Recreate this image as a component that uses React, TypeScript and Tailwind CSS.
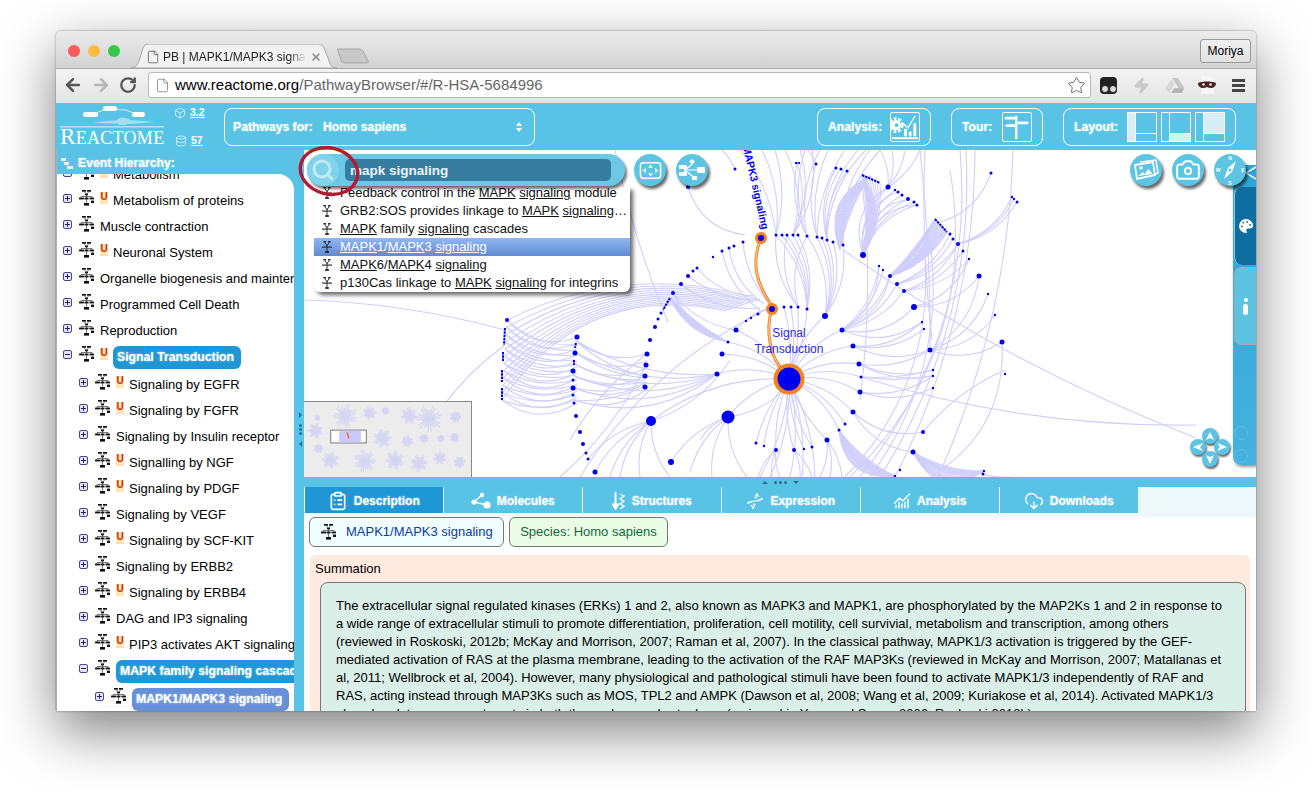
import {
  ArrowLeft, ArrowRight, Box, Camera, ChartNoAxesCombined, ClipboardList, CloudDownload,
  Database, Dna, File, Palette, RotateCw, Search, Star, X, Zap,
} from 'lucide-react'

type Pt = [number, number]

const range = (x1: number, y1: number, x2: number, y2: number, n: number): Pt[] =>
  Array.from({ length: n }, (_, i) => [x1 + ((x2 - x1) * i) / (n - 1), y1 + ((y2 - y1) * i) / (n - 1)] as Pt)

const arc = (x1: number, y1: number, x2: number, y2: number, c: number) => {
  const mx = (x1 + x2) / 2 - (y2 - y1) * c
  const my = (y1 + y2) / 2 + (x2 - x1) * c
  return `M${x1} ${y1}Q${mx} ${my} ${x2} ${y2}`
}

const fan = (from: Pt, to: Pt[], c = 0.2) => to.map((t) => arc(from[0], from[1], t[0], t[1], c))
const sweep = (from: Pt, to: Pt, c1: number, c2: number, n: number) =>
  Array.from({ length: n }, (_, i) => arc(from[0], from[1], to[0], to[1], c1 + ((c2 - c1) * i) / (n - 1)))

const edges: string[] = [
  ...fan([789, 379], [[776, 450], [764, 446], [756, 443], [794, 450], [804, 449], [812, 447], [827, 440]], 0.12),
  ...fan([789, 379], [[839, 430], [845, 424], [853, 412], [860, 392], [861, 377], [860, 364], [853, 346], [842, 330], [825, 316]], -0.18),
  ...fan([789, 379], [[807, 309], [798, 307], [791, 307], [784, 307]], 0.1),
  ...fan([789, 379], [[717, 374], [722, 354], [728, 342], [736, 330], [728, 417], [651, 421]], 0.18),
  ...fan([789, 379], [[770, 477], [790, 477], [802, 477], [815, 477], [760, 477]], -0.12),
  ...fan([776, 450], [[772, 477], [780, 477], [758, 477]], 0.15),
  ...fan([794, 450], [[800, 477], [812, 477]], -0.15),
  ...fan([827, 440], [[830, 477], [842, 477], [820, 477]], -0.15),
  ...fan([728, 417], [[747, 477], [712, 477], [690, 472], [671, 462], [700, 440], [789, 385]], 0.18),
  ...fan([651, 421], [[595, 472], [640, 477], [620, 477], [588, 459], [610, 477], [670, 477], [730, 360]], 0.18),
  ...fan([772, 309], [[758, 314], [751, 318], [746, 321], [736, 330]], 0.2),
  ...fan([807, 309], [[776, 235], [782, 235], [787, 235], [793, 235], [798, 235]], 0.18),
  ...fan([798, 307], [[776, 235], [787, 235], [807, 236]], -0.2),
  ...fan([825, 316], [[807, 236], [817, 237], [822, 238], [827, 240], [833, 242], [843, 245]], 0.2),
  ...fan([842, 330], [[879, 266], [883, 270], [890, 276], [897, 284], [904, 291]], 0.2),
  ...fan([776, 235], [[740, 150], [762, 150], [775, 150]], 0.15),
  ...fan([793, 235], [[797, 163], [785, 150], [800, 150], [812, 150]], 0.2),
  ...fan([807, 236], [[797, 163], [805, 150], [820, 150]], -0.18),
  ...fan([817, 237], [[816, 164], [828, 150], [845, 150]], -0.15),
  ...fan([827, 240], [[836, 168], [840, 169], [847, 171], [858, 150], [866, 150]], -0.2),
  ...fan([843, 245], [[862, 175], [870, 150], [880, 150]], -0.2),
  ...fan([863, 255], range(862, 175, 880, 183, 8), 0.16),
  ...fan([863, 255], [[888, 187], [895, 190], [902, 195], [908, 199], [914, 202], [917, 205]], -0.25),
  ...fan([863, 255], [[888, 187], [898, 192], [908, 199], [917, 205]], -0.4),
  ...sweep([863, 255], [862, 175], 0.1, 0.34, 10),
  ...sweep([840, 250], [870, 176], -0.45, -0.1, 16),
  ...fan([888, 187], [[880, 150], [892, 150], [905, 150], [920, 150]], 0.16),
  ...sweep([890, 276], [935, 219], 0.05, 0.16, 8),
  ...fan([890, 276], range(935, 219, 947, 232, 14), 0.2),
  ...fan([897, 284], [[950, 234], [953, 239], [958, 244]], 0.2),
  ...fan([904, 291], [[958, 244], [963, 251], [969, 259]], 0.2),
  ...fan([914, 307], [[979, 276], [969, 259]], 0.25),
  ...fan([930, 350], [[979, 276], [988, 294], [995, 315], [1002, 342]], 0.25),
  ...fan([958, 244], [[1012, 197], [1014, 199], [1017, 202]], 0.22),
  ...fan([941, 222], [[991, 173]], 0.25),
  ...fan([842, 330], [[914, 307], [922, 322], [879, 266], [890, 276]], 0.28),
  ...fan([853, 346], [[922, 322], [924, 329], [930, 350]], 0.22),
  ...fan([859, 364], [[930, 350], [933, 370], [933, 376]], 0.18),
  ...fan([861, 377], [[933, 370], [933, 376], [1196, 425]], 0.08),
  ...fan([860, 392], [[933, 388], [933, 376]], 0.2),
  ...fan([853, 412], [[923, 432], [913, 452]], 0.25),
  ...sweep([913, 452], [984, 471], 0.14, 0.56, 14),
  ...sweep([839, 430], [895, 476], 0.12, 0.5, 16),
  arc(983, 474, 1010, 477, 0.1),
  arc(843, 250, 1196, 438, 0.06),
  arc(938, 477, 1013, 150, 0.1),
  arc(895, 477, 975, 150, 0.12),
  arc(880, 477, 966, 150, 0.16),
  arc(860, 477, 960, 150, 0.2),
  arc(850, 477, 950, 170, 0.26),
  arc(870, 477, 930, 240, 0.2),
  arc(845, 477, 925, 260, 0.22),
  arc(932, 340, 925, 150, -0.04),
  arc(930, 350, 920, 150, 0.03),
  arc(860, 400, 862, 180, 0.06),
  arc(1002, 342, 930, 477, -0.3),
  arc(923, 432, 1005, 370, -0.12),
  arc(615, 150, 668, 322, 0.05),
  arc(688, 187, 745, 235, 0.32),
  arc(735, 169, 722, 150, 0.1),
  arc(816, 164, 808, 150, 0.1),
  ...fan([673, 293], [[728, 342], [736, 330]], 0.2),
  ...sweep([670, 298], [728, 342], 0.08, 0.26, 12),
  ...range(507, 320, 502, 400, 12).flatMap((p, i) => [
    arc(p[0], p[1], 577, 337 + i * 6, 0.34),
    arc(p[0], p[1], 575, 345 + i * 5, 0.2),
    arc(p[0], p[1], 760 - i * 3, 300 + i, -0.2 - i * 0.012),
  ]),
  ...range(575, 340, 574, 400, 6).flatMap((p, i) => [
    arc(p[0], p[1], 647, 354 + i * 7, 0.26),
    arc(p[0], p[1], 645, 376 + i * 2, 0.14),
    arc(p[0], p[1], 717, 374, 0.16 + i * 0.02),
  ]),
  arc(505, 330, 304, 300, 0.06),
  arc(505, 345, 440, 410, 0.08),
  arc(681, 284, 760, 308, 0.2),
  arc(688, 276, 760, 300, 0.18),
  arc(697, 268, 755, 296, 0.22),
  arc(722, 251, 760, 310, 0.2),
  arc(743, 242, 768, 302, 0.16),
  arc(729, 248, 764, 304, 0.22),
  arc(646, 365, 560, 477, -0.1),
  arc(758, 314, 580, 477, 0.14),
  arc(647, 354, 570, 440, 0.1),
]

// [x, y, r], page coordinates
const dots: [number, number, number][] = [
  [735, 169, 1.5], [816, 164, 1.5], [688, 187, 2], [836, 168, 1.5], [841, 169, 1.5], [847, 171, 1.5],
  [776, 235, 1.5], [782, 235, 1.5], [787, 235, 1.5], [793, 235, 1.5], [798, 235, 1.5], [807, 236, 1.5], [817, 237, 1.5],
  [822, 238, 1.5], [827, 240, 1.5], [833, 242, 1.5], [843, 245, 1.5], [863, 255, 3],
  [743, 242, 1.5], [734, 246, 1.5], [729, 248, 1.5], [722, 251, 1.5], [713, 257, 1.2],
  [697, 268, 1.5], [693, 271, 1.5], [688, 276, 2], [681, 284, 2], [673, 293, 2],
  [661, 313, 1.5], [658, 319, 1.5], [655, 327, 2], [650, 340, 2], [647, 354, 2.5], [646, 365, 2.5], [645, 376, 2.5], [645, 387, 2.5],
  [577, 337, 2.5], [575, 353, 2.5], [573, 371, 2.5], [573, 388, 2.5], [573, 380, 1.5], [573, 395, 1.5], [574, 403, 1.5],
  [576, 416, 2], [580, 432, 2], [583, 444, 2], [586, 453, 1.5], [588, 459, 1.5], [595, 472, 2.5],
  [507, 320, 2], [736, 330, 2.5], [728, 342, 1.5], [722, 354, 2.5], [717, 374, 2.5], [728, 417, 6.5], [651, 421, 5], [671, 462, 3],
  [758, 314, 1.5], [751, 318, 1.2], [746, 321, 1.2], [784, 307, 1.5], [791, 307, 1.5], [798, 307, 1.5], [807, 309, 1.5],
  [825, 316, 3], [842, 330, 2.5], [853, 346, 2.5], [859, 364, 2.5], [861, 377, 1.5], [860, 392, 2.5], [853, 412, 2.5],
  [845, 424, 1.5], [839, 430, 1.5], [827, 440, 2.5], [812, 447, 1.5], [804, 449, 1.2], [794, 450, 2], [776, 450, 2], [764, 446, 1.2], [756, 443, 1.5],
  [888, 187, 2.5], [895, 190, 1.2], [898, 192, 1.5], [902, 195, 1.5], [908, 199, 2], [914, 202, 1.5], [917, 205, 1.5],
  [991, 173, 1.5], [1012, 197, 1.2], [1014, 199, 1.2], [1017, 202, 1.5], [950, 234, 1.5], [953, 239, 1.5], [958, 244, 2], [963, 251, 1.5], [969, 259, 1.2],
  [979, 276, 2.5], [988, 294, 1.2], [995, 315, 1.2], [1002, 342, 2.5], [1005, 374, 1.2],
  [879, 266, 1.2], [883, 270, 1.2], [890, 276, 2], [897, 284, 2], [904, 291, 2], [914, 307, 3], [922, 322, 1.2], [924, 329, 1.2], [930, 350, 2.5],
  [933, 370, 1.2], [933, 376, 1.2], [933, 388, 1.2], [923, 432, 2], [913, 452, 2.5], [900, 470, 1.2], [895, 476, 1.2], [984, 471, 1.2], [983, 474, 1.5],
]

// thick runs of dots drawn as short bars
const bars: [number, number, number, number][] = [
  [795, 163, 800, 163], [862, 175, 880, 183], [935, 219, 947, 232], [670, 298, 663, 310],
  [576, 343, 575, 348], [574, 360, 574, 365], [505, 328, 504, 345], [503, 352, 503, 362], [502, 370, 502, 382], [502, 388, 502, 400],
]

const miniClusters: [number, number, number][] = [
  [345, 415, 13], [370, 412, 7], [386, 410, 4], [317, 417, 3], [410, 415, 9], [430, 418, 14], [457, 416, 6], [315, 430, 8],
  [383, 438, 10], [408, 441, 6], [425, 438, 5], [442, 438, 4], [456, 437, 5], [318, 448, 5], [330, 460, 9], [365, 461, 12],
  [395, 460, 10], [420, 463, 9], [441, 458, 7], [461, 462, 6],
]

function PathwayIcon({ className = '' }: { className?: string }) {
  return (
    <svg viewBox="0 0 15 16" className={`h-4 w-[15px] flex-none ${className}`} fill="#111">
      <rect x="3" y="0" width="4" height="1.7" />
      <rect x="8" y="0" width="4" height="1.7" />
      <path d="M5 1.7 7.5 4 10 1.7M2 8V6.5H13V8M7.5 4V13" fill="none" stroke="#555" strokeWidth="0.8" />
      <rect x="6" y="3.6" width="3" height="1.7" />
      <rect x="0" y="7.6" width="5" height="1.8" />
      <rect x="5.5" y="7.6" width="4" height="1.8" />
      <rect x="10.5" y="7.6" width="4.5" height="1.8" />
      <rect x="5" y="13" width="5" height="2.6" />
      <rect x="12" y="10.6" width="3" height="2.4" />
    </svg>
  )
}

function ReactionIcon() {
  return (
    <svg viewBox="0 0 11 13" className="h-[12px] w-[10px] flex-none" fill="#222">
      <rect x="1.5" y="0" width="3" height="1.5" />
      <rect x="6.5" y="0" width="3" height="1.5" />
      <path d="M3 1.5 5.5 5 8 1.5" fill="none" stroke="#222" />
      <rect x="5" y="4" width="1" height="7" />
      <rect x="0" y="6" width="11" height="1.2" />
      <rect x="3.5" y="11" width="4" height="2" />
    </svg>
  )
}

function Toggle({ open }: { open?: boolean }) {
  return (
    <svg viewBox="0 0 9 9" className="h-[9px] w-[9px] flex-none -translate-y-[3px]">
      <rect x="0.5" y="0.5" width="8" height="8" rx="1.5" fill="#e6e6f6" stroke="#44449c" />
      <rect x="2" y="4" width="5" height="1" fill="#22226a" />
      {!open && <rect x="4" y="2" width="1" height="5" fill="#22226a" />}
    </svg>
  )
}

function UBadge() {
  return (
    <span className="mr-[5px] flex h-3 w-2 flex-none -translate-y-[3px] items-start justify-center bg-[#fde3b4] text-[10px] leading-[10px] font-bold text-[#d91f00]">
      U
    </span>
  )
}

type Row = { label: string; depth: 0 | 1 | 2; u?: boolean; open?: boolean; pill?: 'blue' | 'violet'; gap?: boolean }

const rows: Row[] = [
  { label: 'Metabolism', depth: 0, u: true, open: true },
  { label: 'Metabolism of proteins', depth: 0, u: true },
  { label: 'Muscle contraction', depth: 0 },
  { label: 'Neuronal System', depth: 0, u: true },
  { label: 'Organelle biogenesis and maintenance', depth: 0 },
  { label: 'Programmed Cell Death', depth: 0 },
  { label: 'Reproduction', depth: 0 },
  { label: 'Signal Transduction', depth: 0, u: true, open: true, pill: 'blue', gap: true },
  { label: 'Signaling by EGFR', depth: 1, u: true },
  { label: 'Signaling by FGFR', depth: 1, u: true },
  { label: 'Signaling by Insulin receptor', depth: 1 },
  { label: 'Signalling by NGF', depth: 1, u: true },
  { label: 'Signaling by PDGF', depth: 1, u: true },
  { label: 'Signaling by VEGF', depth: 1 },
  { label: 'Signaling by SCF-KIT', depth: 1, u: true },
  { label: 'Signaling by ERBB2', depth: 1 },
  { label: 'Signaling by ERBB4', depth: 1, u: true },
  { label: 'DAG and IP3 signaling', depth: 1 },
  { label: 'PIP3 activates AKT signaling', depth: 1, u: true },
  { label: 'MAPK family signaling cascades', depth: 1, open: true, pill: 'blue', gap: true },
  { label: 'MAPK1/MAPK3 signaling', depth: 2, pill: 'violet' },
]

function TreeRow({ row }: { row: Row }) {
  const indent = row.depth === 0 ? 'pl-[6px]' : row.depth === 1 ? 'pl-[22px]' : 'pl-[38px]'
  return (
    <div className={`flex h-[26px] items-center whitespace-nowrap text-[13px] text-black ${indent} ${row.gap ? 'mb-[2px]' : ''}`}>
      <Toggle open={row.open} />
      <PathwayIcon className="mr-[6px] ml-[7px] -translate-y-[3px]" />
      {row.u && <UBadge />}
      {row.pill ? (
        <span
          className={`flex h-[23px] items-center rounded-md pr-[7px] pl-[4px] text-[12.25px] font-bold text-white [text-shadow:0_0_2px_rgba(255,255,255,0.7)] ${
            row.pill === 'blue' ? 'bg-[#1f97d4]' : 'bg-[#6690d8]'
          }`}
        >
          {row.label}
        </span>
      ) : (
        row.label
      )}
    </div>
  )
}

function Signal({ x, y, r = 1.5 }: { x: number; y: number; r?: number }) {
  return <circle cx={x} cy={y} r={r} fill="#0000f0" />
}

function Graph() {
  return (
    <svg viewBox="304 150 952 327" className="absolute inset-0 h-full w-full">
      <g fill="none" stroke="#cfcffb" strokeWidth="1.1">
        {edges.map((d, i) => (
          <path key={i} d={d} />
        ))}
      </g>
      <path d="M761 238C750 265 758 285 771 305" fill="none" stroke="#f58220" strokeWidth="3" />
      <path d="M772 309C765 330 770 360 785 372" fill="none" stroke="#f58220" strokeWidth="3" />
      <path d="M761 238C750 265 758 285 771 305M772 309C765 330 770 360 785 372" fill="none" stroke="#f8e8dc" strokeWidth="0.8" />
      <g stroke="#0000f0" strokeWidth="2" strokeDasharray="2.5 0.8">
        {bars.map((b, i) => (
          <line key={i} x1={b[0]} y1={b[1]} x2={b[2]} y2={b[3]} />
        ))}
      </g>
      {dots.map((d, i) => (
        <Signal key={i} x={d[0]} y={d[1]} r={d[2]} />
      ))}
      <circle cx="761" cy="238" r="6" fill="#f58220" />
      <Signal x={761} y={238} r={3} />
      <circle cx="772" cy="309" r="6" fill="#f58220" />
      <Signal x={772} y={309} r={3} />
      <circle cx="789" cy="379" r="15.5" fill="#f58220" />
      <Signal x={789} y={379} r={11.5} />
      <text x="762" y="230" transform="rotate(77 762 230)" textAnchor="end" fill="#0000f0" fontSize="10.5" fontWeight="bold">
        MAPK1/MAPK3 signaling
      </text>
      <text x="789" y="337" textAnchor="middle" fill="#2a2af0" fontSize="12">
        Signal
      </text>
      <text x="789" y="353" textAnchor="middle" fill="#2a2af0" fontSize="12">
        Transduction
      </text>
    </svg>
  )
}

function Minimap() {
  return (
    <div className="absolute bottom-0 left-0 h-[76px] w-[168px] border-t border-r border-[#888] bg-[#ececec]">
      <svg viewBox="304 401 168 76" className="h-full w-full">
        <g stroke="#d5d5f4" strokeWidth="1.2">
          {miniClusters.flatMap((c, i) =>
            Array.from({ length: 26 }, (_, j) => {
              const a = (j / 26) * Math.PI * 2 + i
              const l = c[2] * (0.5 + 0.5 * Math.abs(Math.sin(j * 2.3 + i)))
              return <line key={`${i}-${j}`} x1={c[0]} y1={c[1]} x2={c[0] + Math.cos(a) * l} y2={c[1] + Math.sin(a) * l} />
            }),
          )}
        </g>
        <rect x="330.5" y="429.5" width="36" height="13" fill="#fff" stroke="#777" />
        <rect x="339" y="430" width="22" height="12" fill="#c9c9fb" />
        <path d="M347 432 349 438" stroke="#f2682a" strokeWidth="1.5" />
      </svg>
    </div>
  )
}

function RoundButton({ className, children }: { className: string; children: React.ReactNode }) {
  return (
    <div className={`absolute top-[4px] flex h-8 w-8 items-center justify-center rounded-full bg-[#5ec4e4] text-white shadow-[2px_3px_3px_rgba(0,0,0,0.6)] ${className}`}>
      {children}
    </div>
  )
}

function ArrowButton({ className, d }: { className: string; d: string }) {
  return (
    <div className={`absolute flex h-4 w-4 items-center justify-center rounded-full bg-[#5ec4e4] shadow-[1px_2px_2px_rgba(0,0,0,0.6)] ${className}`}>
      <svg viewBox="0 0 12 12" className="h-3 w-3" fill="#fff">
        <path d={d} />
      </svg>
    </div>
  )
}

function LayoutIcon({ active }: { active: 'left' | 'bottom' | 'top' }) {
  return (
    <div className="grid h-[30px] w-[30px] grid-cols-[7px_1fr] grid-rows-[1fr_7px] gap-px border border-white bg-white">
      <div className={`row-span-2 ${active === 'left' ? 'bg-[#d6eef6]' : 'bg-[#58c3e5]'}`} />
      <div className={active === 'top' ? 'bg-[#d6eef6]' : 'bg-[#58c3e5]'} />
      <div className={active === 'bottom' ? 'bg-[#d6eef6]' : 'bg-[#58c3e5]'} />
    </div>
  )
}

function HeaderGroup({ label, className = '', children }: { label: string; className?: string; children: React.ReactNode }) {
  return (
    <div className={`flex h-[38px] items-center justify-between rounded-lg border border-white px-[10px] text-[12.2px] font-bold text-white [text-shadow:0_0_2px_rgba(255,255,255,0.6)] ${className}`}>
      <span className="translate-y-px">{label}</span>
      {children}
    </div>
  )
}

const tabs = [
  { label: 'Description', icon: <ClipboardList className="h-5 w-5" strokeWidth={2} />, active: true },
  {
    label: 'Molecules',
    icon: (
      <svg viewBox="0 0 20 18" className="h-[18px] w-5" fill="#fff">
        <circle cx="3" cy="10" r="2.6" />
        <circle cx="11" cy="3" r="2.2" />
        <circle cx="16" cy="13" r="3.6" />
        <path d="M3 10 11 3M3 10 16 13" stroke="#fff" strokeWidth="1.4" />
      </svg>
    ),
  },
  {
    label: 'Structures',
    icon: (
      <svg viewBox="0 0 14 20" className="h-5 w-[14px]" fill="none" stroke="#fff">
        <path d="M3.5 1V14" strokeWidth="2" />
        <path d="M0 13 3.5 19 7 13Z" fill="#fff" />
        <path d="M8 3 12 5 8 8 12 10 8 13 12 15 8 18" strokeWidth="1.3" />
      </svg>
    ),
  },
  { label: 'Expression', icon: <Dna className="h-[18px] w-[18px]" strokeWidth={1.5} /> },
  { label: 'Analysis', icon: <ChartNoAxesCombined className="h-[18px] w-[18px]" strokeWidth={2} /> },
  { label: 'Downloads', icon: <CloudDownload className="h-5 w-5" strokeWidth={1.6} /> },
]

const matches = [
  <>Feedback control in the <u>MAPK</u> <u>signaling</u> module</>,
  <>GRB2:SOS provides linkage to <u>MAPK</u> <u>signaling</u>…</>,
  <><u>MAPK</u> family <u>signaling</u> cascades</>,
  <><u>MAPK</u>1/<u>MAPK</u>3 <u>signaling</u></>,
  <><u>MAPK</u>6/<u>MAPK</u>4 <u>signaling</u></>,
  <>p130Cas linkage to <u>MAPK</u> <u>signaling</u> for integrins</>,
]

const summation = [
  'The extracellular signal regulated kinases (ERKs) 1 and 2, also known as MAPK3 and MAPK1, are phosphorylated by the MAP2Ks 1 and 2 in response to',
  'a wide range of extracellular stimuli to promote differentiation, proliferation, cell motility, cell survivial, metabolism and transcription, among others',
  '(reviewed in Roskoski, 2012b; McKay and Morrison, 2007; Raman et al, 2007). In the classical pathway, MAPK1/3 activation is triggered by the GEF-',
  'mediated activation of RAS at the plasma membrane, leading to the activation of the RAF MAP3Ks (reviewed in McKay and Morrison, 2007; Matallanas et',
  'al, 2011; Wellbrock et al, 2004). However, many physiological and pathological stimuli have been found to activate MAPK1/3 independently of RAF and',
  'RAS, acting instead through MAP3Ks such as MOS, TPL2 and AMPK (Dawson et al, 2008; Wang et al, 2009; Kuriakose et al, 2014). Activated MAPK1/3',
  'phosphorylate numerous targets in both the nucleus and cytoplasm (reviewed in Yoon and Seger, 2006; Roskoski 2012b).',
]

export default function App() {
  return (
    <div className="h-[792px] w-[1312px] overflow-hidden bg-white pt-[31px] pl-[56px] [font-family:'Liberation_Sans',Arial,sans-serif]">
      <div className="flex h-[680px] w-[1200px] flex-col overflow-hidden rounded-t-[5px] shadow-[0_20px_55px_rgba(0,0,0,0.5),0_0_2px_rgba(0,0,0,0.5)]">
        {/* Title bar */}
        <div className="relative flex h-[37px] flex-none items-start bg-gradient-to-b from-[#ececec] to-[#d2d2d2]">
          <div className="mt-[14px] ml-[12px] flex gap-2">
            <span className="h-3 w-3 rounded-full bg-[#fc5b57]" />
            <span className="h-3 w-3 rounded-full bg-[#fdbc40]" />
            <span className="h-3 w-3 rounded-full bg-[#34c749]" />
          </div>
          <div className="relative mt-[13px] ml-[11px] h-6 w-[206px]">
            <svg viewBox="0 0 206 24" className="absolute inset-0 h-full w-full">
              <path d="M0 24C6 24 7 20 9 14L12 4C13 1 15 0 18 0H187C190 0 192 1 193 4L197 14C199 20 200 24 206 24Z" fill="#f2f2f2" stroke="#a8a8a8" />
            </svg>
            <div className="absolute inset-0 flex items-center pt-px pl-[15px] text-[12px] whitespace-nowrap text-[#222]">
              <File className="mr-[3px] h-[14px] w-[14px] text-[#555]" strokeWidth={1.3} />
              <span className="w-[143px] overflow-hidden [mask-image:linear-gradient(to_right,black_88%,transparent)]">PB | MAPK1/MAPK3 signaling</span>
              <X className="ml-[4px] h-[12px] w-[12px] text-[#888]" strokeWidth={3} />
            </div>
          </div>
          <svg viewBox="0 0 32 16" className="mt-[17px] h-4 w-8">
            <path d="M1 1H22C24 1 25 2 26 3L31 13C31.5 15 30 15 29 15H8C6 15 5 14 4.5 13L1 3C0.7 2 0 1 1 1Z" fill="#c8c8c8" stroke="#a5a5a5" />
          </svg>
          <div className="ml-auto mt-[8px] mr-[5px] flex h-6 w-[51px] items-center justify-center rounded-[3px] border border-[#9a9a9a] bg-gradient-to-b from-[#f0f0f0] to-[#e2e2e2] text-[12px] text-black">
            Moriya
          </div>
        </div>

        {/* Toolbar */}
        <div className="flex h-[35px] flex-none items-center border-t border-[#a8a8a8] bg-gradient-to-b from-[#f3f3f3] to-[#e4e4e4] pb-[2px]">
          <ArrowLeft className="ml-[7px] h-5 w-5 text-[#555]" strokeWidth={3} />
          <ArrowRight className="ml-[8px] h-5 w-5 text-[#b5b5b5]" strokeWidth={3} />
          <RotateCw className="ml-[8px] h-[18px] w-[18px] text-[#555]" strokeWidth={3} />
          <div className="ml-[11px] flex h-[26px] w-[943px] items-center rounded-[3px] border border-[#b8b8b8] bg-white pr-1 pl-[6px] text-[15px] whitespace-nowrap">
            <File className="mr-[5px] h-[15px] w-[15px] text-[#777]" strokeWidth={1.2} />
            <span className="text-black">www.reactome.org</span>
            <span className="text-[#666]">/PathwayBrowser/#/R-HSA-5684996</span>
            <Star className="ml-auto h-[19px] w-[19px] text-[#666]" strokeWidth={1.2} />
          </div>
          <div className="ml-[9px] flex h-[17px] w-[17px] items-end justify-center gap-0 rounded-[4px] bg-[#222] pb-[1px]">
            <span className="h-[8px] w-[8px] rounded-full border border-[#222] bg-[#ddd]" />
            <span className="h-[8px] w-[8px] rounded-full border border-[#222] bg-[#ddd]" />
          </div>
          <Zap className="ml-[16px] h-[17px] w-[17px] fill-[#c8c8c8] text-[#c8c8c8]" />
          <svg viewBox="0 0 20 18" className="ml-[15px] h-[17px] w-5">
            <path d="M7 1H13L20 12H14Z" fill="#c6c6c6" />
            <path d="M6.5 2 9.5 7 3.5 17 0 12Z" fill="#d6d6d6" />
            <path d="M6 17 9 12H20L17 17Z" fill="#b4b4b4" />
          </svg>
          <svg viewBox="0 0 20 20" className="ml-[12px] h-5 w-5">
            <path d="M4 1H14L17 5V19H4Z" fill="#f5f5f5" />
            <path d="M1 8C5 6 15 6 19 8C19 13 14 14 10 12C6 14 1 13 1 8Z" fill="#4a2420" />
            <circle cx="6.5" cy="9.5" r="1.3" fill="#eee" />
            <circle cx="13.5" cy="9.5" r="1.3" fill="#eee" />
          </svg>
          <div className="ml-[15px] flex w-[13px] flex-col gap-[2px]">
            <span className="h-[3px] bg-[#444]" />
            <span className="h-[3px] bg-[#444]" />
            <span className="h-[3px] bg-[#444]" />
          </div>
        </div>

        {/* App header */}
        <div className="flex h-[47px] flex-none items-center bg-[#58c3e5] pr-[20px] text-white">
          <div className="relative h-[47px] w-[112px] flex-none overflow-hidden">
            <svg viewBox="0 0 110 26" className="absolute top-[1px] left-[4px] h-[26px] w-[110px]" fill="#fff">
              <rect x="23" y="8" width="15" height="5" rx="2.5" />
              <rect x="43" y="2" width="14" height="5" rx="2.5" />
              <rect x="72" y="8" width="13" height="5" rx="2.5" />
              <path d="M36 9 46 5M55 5 66 6 76 10" stroke="#fff" fill="none" strokeWidth="0.7" />
              <path d="M33 19C45 16 70 15 95 18L70 20ZM60 14C70 13 74 17 66 21H60C55 19 55 16 60 14Z" opacity="0.45" />
              <rect x="0" y="22.5" width="104" height="0.8" />
            </svg>
            <span className="absolute top-[17px] left-[4px] font-['Liberation_Serif'] text-[18px] tracking-[0.3px] text-white">
              <span className="text-[23px]">R</span>EACTOME
            </span>
          </div>
          <div className="flex h-[47px] w-[56px] flex-none flex-col justify-between pt-[2px] text-[10.5px] font-bold">
            <div className="flex items-center gap-1 pl-[6px]">
              <Box className="h-3 w-3" strokeWidth={1.3} />
              <u>3.2</u>
            </div>
            <div className="flex items-center gap-1 pb-px pl-[7px]">
              <Database className="h-3 w-3" strokeWidth={1.3} />
              <u>57</u>
            </div>
          </div>
          <div className="flex h-[38px] w-[311px] flex-none items-center rounded-lg border border-white pt-px pr-[12px] pl-[8px] text-[12.2px] font-bold [text-shadow:0_0_2px_rgba(255,255,255,0.6)]">
            <span className="mr-[10px]">Pathways for:</span>
            Homo sapiens
            <div className="ml-auto flex flex-col gap-[2px]">
              <span className="h-0 w-0 border-x-[3px] border-b-[4px] border-x-transparent border-b-white" />
              <span className="h-0 w-0 border-x-[3px] border-t-[4px] border-x-transparent border-t-white" />
            </div>
          </div>
          <div className="flex-1" />
          <div className="flex gap-5">
            <HeaderGroup label="Analysis:" className="w-[114px]">
              <svg viewBox="0 0 30 30" className="h-[30px] w-[30px] rounded-[2px] border border-white">
                <circle cx="5" cy="13" r="7" fill="none" stroke="#fff" strokeWidth="3" strokeDasharray="3 2" />
                <circle cx="5" cy="13" r="5.5" fill="#fff" />
                <circle cx="6" cy="13" r="2" fill="#58c3e5" />
                <path d="M13 11 18 16 26 3" fill="none" stroke="#fff" strokeWidth="1.3" />
                <rect x="14" y="17" width="3" height="8" fill="#fff" />
                <rect x="19" y="20" width="3" height="5" fill="#fff" />
                <rect x="24" y="11" width="3" height="14" fill="#fff" />
                <rect x="1" y="26" width="28" height="2" fill="#fff" />
              </svg>
            </HeaderGroup>
            <HeaderGroup label="Tour:" className="w-[92px]">
              <svg viewBox="0 0 30 30" className="h-[30px] w-[30px] rounded-[2px] border border-white">
                <rect x="13" y="3" width="2.5" height="25" fill="#fff" />
                <path d="M3 4H13V7H3L1 5.5Z" fill="#fff" />
                <path d="M16 9H26L28 10.5 26 12H16Z" fill="#fff" />
                <path d="M4 12H13V15H4L2 13.5Z" fill="#fff" />
              </svg>
            </HeaderGroup>
            <HeaderGroup label="Layout:" className="w-[173px]">
              <div className="flex gap-1">
                <LayoutIcon active="left" />
                <LayoutIcon active="bottom" />
                <LayoutIcon active="top" />
              </div>
            </HeaderGroup>
          </div>
        </div>

        {/* Main */}
        <div className="flex min-h-0 flex-1 bg-[#58c3e5]">
          <div className="relative flex w-[248px] flex-none flex-col border-l border-[#b0b0b0] pr-[10px]">
            <div className="flex h-[24px] flex-none items-center gap-[5px] pt-[3px] pl-[4px] text-[12.2px] font-bold text-white [text-shadow:0_0_2px_rgba(255,255,255,0.6)]">
              <svg viewBox="0 0 12 12" className="h-3 w-3" fill="#e6f6fb">
                <rect x="0" y="0" width="5" height="3" />
                <rect x="3" y="4" width="5" height="3" />
                <rect x="6" y="8" width="6" height="3" />
              </svg>
              Event Hierarchy:
            </div>
            <div className="min-h-0 flex-1 overflow-hidden rounded-tr-[16px] bg-white">
              <div className="-mt-[12px]">
                {rows.map((row) => (
                  <TreeRow key={row.label} row={row} />
                ))}
              </div>
            </div>
            <div className="absolute top-[262px] right-[2px] flex flex-col items-center gap-px text-[#2a6f92]">
              <span className="mb-[5px] h-0 w-0 border-y-[3px] border-l-[3px] border-y-transparent border-l-current" />
              <span className="h-[3px] w-[3px] rounded-full bg-current" />
              <span className="h-[3px] w-[3px] rounded-full bg-current" />
              <span className="h-[3px] w-[3px] rounded-full bg-current" />
              <span className="mt-[5px] h-0 w-0 border-y-[3px] border-r-[3px] border-y-transparent border-r-current" />
            </div>
          </div>

          <div className="flex min-w-0 flex-1 flex-col">
            {/* Diagram */}
            <div className="relative h-[327px] flex-none bg-white">
              <Graph />
              <Minimap />

              {/* Settings panel peeking in from the right */}
              <div className="absolute top-[15px] right-0 flex h-[300px] w-[23px] flex-col overflow-hidden rounded-l-lg bg-gradient-to-b from-[#2da3d8] to-[#45b2e0] pl-px shadow-[1px_2px_3px_rgba(0,0,0,0.4)]">
                <div className="h-[22px] flex-none pt-[1px] pl-[10px] text-white">
                  <svg viewBox="0 0 12 14" className="h-[14px] w-3" fill="none" stroke="#e8f7fc" strokeWidth="1.6">
                    <path d="M12 1 2 7 12 13" />
                  </svg>
                </div>
                <div className="flex h-[78px] flex-none items-center justify-center rounded-l-lg border-l border-[#9cc] bg-[#0f6ea0]">
                  <Palette className="h-[18px] w-[18px] fill-white text-[#0f6ea0]" strokeWidth={1.5} />
                </div>
                <div className="mt-[2px] flex h-[78px] flex-none items-center justify-center rounded-l-lg border border-r-0 border-[#aaa] bg-[#5cc3e2]">
                  <div className="flex flex-col items-center gap-[2px]">
                    <span className="h-[4px] w-[4px] rounded-full bg-white" />
                    <span className="h-[11px] w-[5px] rounded-sm bg-white" />
                  </div>
                </div>
                <div className="mt-auto mb-[2px] flex flex-col gap-[9px]">
                  <span className="h-[14px] w-[14px] rounded-full border border-[#60bce2]" />
                  <span className="h-[14px] w-[14px] rounded-full border border-[#60bce2]" />
                </div>
              </div>

              <div className="absolute top-[37px] left-[10px] w-[316px] overflow-hidden rounded-b-md bg-white text-[13px] text-[#111] shadow-[3px_3px_4px_rgba(0,0,0,0.6)]">
                <div className="-mt-[3px]">
                  {matches.map((m, i) => (
                    <div
                      key={i}
                      className={`flex h-[18px] items-center gap-[8px] pl-[8px] whitespace-nowrap ${
                        i === 3 ? 'bg-gradient-to-b from-[#92b7f2] to-[#5f8bd2] text-white' : ''
                      }`}
                    >
                      <ReactionIcon />
                      <span>{m}</span>
                    </div>
                  ))}
                </div>
              </div>

              <div className="absolute top-[4px] left-[3px] flex h-[32px] w-[318px] items-center rounded-full bg-[#6cc9e6] shadow-[2px_3px_3px_rgba(0,0,0,0.55)]">
                <div className="flex h-[32px] w-[32px] flex-none items-center justify-center rounded-full bg-[#7fd3ea]">
                  <Search className="h-6 w-6 text-[#bfeaf3]" strokeWidth={3} />
                </div>
                <div className="ml-[6px] flex h-[22px] w-[266px] items-center rounded-[5px] bg-[#377d9f] pt-[2px] pl-[5px] text-[13.5px] font-bold text-[#e8f5fa]">
                  mapk signaling
                </div>
              </div>

              <svg viewBox="0 0 70 60" className="absolute -top-[6px] -left-[7px] h-[60px] w-[70px]">
                <ellipse cx="32" cy="27" rx="29" ry="23" fill="none" stroke="#b31b33" strokeWidth="3.4" transform="rotate(14 32 27)" />
              </svg>

              <RoundButton className="left-[330px]">
                <svg viewBox="0 0 24 24" className="h-[23px] w-[23px]" fill="#fff">
                  <rect x="1.5" y="4" width="21" height="16" rx="3" fill="none" stroke="#fff" strokeWidth="1.6" />
                  <path d="M12 6 14.5 9H9.5ZM12 18 9.5 15H14.5ZM4 12 7 9.5V14.5ZM20 12 17 14.5V9.5Z" />
                </svg>
              </RoundButton>
              <RoundButton className="left-[372px]">
                <svg viewBox="0 0 28 24" className="h-[24px] w-[28px]" fill="#fff">
                  <path d="M6 11C12 11 13 5 16 5M6 13C12 13 13 19 16 19M6 12H20" stroke="#fff" fill="none" strokeWidth="1.2" />
                  <rect x="1" y="7" width="8" height="4" rx="1" />
                  <rect x="1" y="14" width="8" height="4" rx="1" />
                  <path d="M14 1 17 3.5 14 6 11 3.5Z" />
                  <rect x="19" y="9" width="8" height="6" rx="1" />
                  <rect x="14" y="18" width="5" height="4" />
                </svg>
              </RoundButton>
              <RoundButton className="left-[826px]">
                <svg viewBox="0 0 26 24" className="h-[24px] w-[26px]" fill="none" stroke="#fff">
                  <path d="M7 4 23 2 25 15 22 16" strokeWidth="1.5" />
                  <path d="M2 7 20 4 22 17 4 21Z" strokeWidth="1.8" />
                  <circle cx="8" cy="10" r="1.8" fill="#fff" stroke="none" />
                  <path d="M5 18 10 14 12 16 15 11 19 15 19.5 16Z" fill="#fff" stroke="none" />
                </svg>
              </RoundButton>
              <RoundButton className="left-[868px]">
                <Camera className="h-[26px] w-[26px]" strokeWidth={1.8} />
              </RoundButton>
              <RoundButton className="left-[910px]">
                <svg viewBox="0 0 32 32" className="h-8 w-8" fill="#fff">
                  <path d="M22 7 18 18 10 25 14 14Z" />
                  <circle cx="16" cy="16" r="1.5" fill="#5ec4e4" />
                  <text x="16" y="6" textAnchor="middle" fontSize="5" fontWeight="bold">N</text>
                  <text x="16" y="31" textAnchor="middle" fontSize="5" fontWeight="bold">S</text>
                  <text x="4" y="18" textAnchor="middle" fontSize="5" fontWeight="bold">W</text>
                  <text x="29" y="18" textAnchor="middle" fontSize="5" fontWeight="bold">E</text>
                </svg>
              </RoundButton>

              <ArrowButton className="top-[278px] left-[898px]" d="M6 2 10 10 6 8 2 10Z" />
              <ArrowButton className="top-[289px] left-[886px]" d="M1 6 11 2 8 6 11 10Z" />
              <ArrowButton className="top-[289px] left-[910px]" d="M11 6 1 10 4 6 1 2Z" />
              <ArrowButton className="top-[301px] left-[898px]" d="M6 11 2 2 6 4 10 2Z" />
            </div>

            {/* Bottom panel */}
            <div className="flex h-[10px] flex-none items-center justify-center gap-[2px] text-[#2a6f92]">
              <span className="mr-[4px] h-0 w-0 border-x-[3px] border-b-[3px] border-x-transparent border-b-current" />
              <span className="h-[3px] w-[3px] rounded-full bg-current" />
              <span className="h-[3px] w-[3px] rounded-full bg-current" />
              <span className="h-[3px] w-[3px] rounded-full bg-current" />
              <span className="ml-[4px] h-0 w-0 border-x-[3px] border-t-[3px] border-x-transparent border-t-current" />
            </div>
            <div className="flex h-[30px] flex-none gap-[1.5px] bg-[#eef9fc] pb-[4px] pl-px">
              {tabs.map((tab) => (
                <div
                  key={tab.label}
                  className={`flex h-[26px] w-[137.5px] items-center justify-center gap-[6px] pt-px text-[12px] font-bold text-white [text-shadow:0_0_2px_rgba(255,255,255,0.6)] ${
                    tab.active ? 'bg-[#1f97d4]' : 'bg-[#58c3e5]'
                  }`}
                >
                  {tab.icon}
                  {tab.label}
                </div>
              ))}
            </div>
            <div className="min-h-0 flex-1 overflow-hidden bg-white pl-[5px] text-[13px]">
              <div className="flex gap-[5px]">
                <div className="flex h-[30px] w-[195px] items-center gap-[10px] rounded-md border border-[#777] bg-[#f0feff] pl-[11px] text-[#0c3b9b]">
                  <PathwayIcon />
                  MAPK1/MAPK3 signaling
                </div>
                <div className="flex h-[30px] w-[159px] items-center justify-center rounded-md border border-[#777] bg-[#ebfde4] text-[#0b6b3f]">
                  Species: Homo sapiens
                </div>
              </div>
              <div className="mt-[8px] mr-[6px] ml-px h-[200px] rounded-t-[5px] bg-[#feeadf] pt-[6px] pl-[5px]">
                <div className="h-[16px] leading-[16px] text-black">Summation</div>
                <div className="mt-[5px] mr-[4px] ml-[5px] h-[200px] rounded-lg border border-[#777] bg-[#d9efe8] pt-[14px] pl-[15px] leading-[18px] text-black">
                  {summation.map((line) => (
                    <div key={line} className="whitespace-nowrap">
                      {line}
                    </div>
                  ))}
                </div>
              </div>
            </div>
          </div>
        </div>
      </div>
    </div>
  )
}
